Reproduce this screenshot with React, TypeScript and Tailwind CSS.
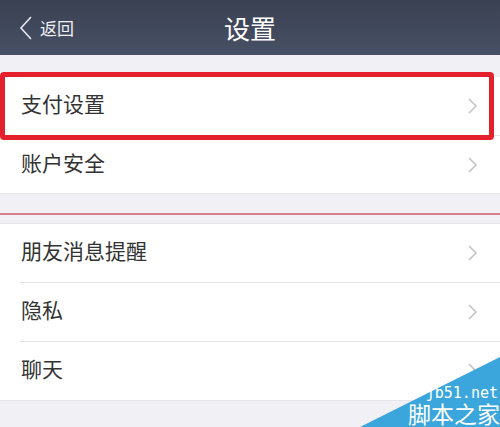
import React from "react";

const font = { fontFamily: '"Noto Sans CJK SC", "Noto Sans", sans-serif' };

const Chevron = () => (
  <svg width="11" height="18" viewBox="0 0 11 18" className="shrink-0">
    <path d="M2 2 L9 9 L2 16" fill="none" stroke="#c4c4c8" strokeWidth="1.6" />
  </svg>
);

const Row = ({ label, line, h }: { label: string; line?: boolean; h: string }) => (
  <div className={`flex flex-col bg-white ${h}`}>
    {line && <div className="ml-[20px] h-px bg-[#e4e4e8]" />}
    <div className="flex flex-1 items-center justify-between pl-[21px] pr-[22px]">
      <span className="mb-[5px] text-[21px] text-[#333] leading-none">{label}</span>
      <Chevron />
    </div>
  </div>
);

export default function App() {
  return (
    <div className="relative w-[500px] h-[427px] overflow-hidden bg-[#f1f1f5]" style={font}>
      <div className="relative h-[55px] flex items-center justify-center bg-gradient-to-b from-[#3a4152] to-[#485065]">
        <div className="absolute left-[19px] top-0 h-full flex items-center gap-[7px]">
          <svg width="14" height="26" viewBox="0 0 14 26">
            <path d="M12 2 L2 13 L12 24" fill="none" stroke="#e6e8ee" strokeWidth="1.6" />
          </svg>
          <span className="text-[17px] text-[#eef0f4]">返回</span>
        </div>
        <span className="text-[26px] text-white">设置</span>
      </div>

      <div className="mt-[22px] border-b border-[#e4e4e8]">
        <div className="relative z-10">
          <Row label="支付设置" h="h-[58px]" />
          <div className="absolute -top-[5px] -bottom-[5px] left-0 right-[6px] border-[5px] border-[#e3202b] rounded-[4px]" />
        </div>
        <Row label="账户安全" line h="h-[58px]" />
      </div>

      <div className="mt-[19px] h-[2px] bg-[#d8808e]" />

      <div className="mt-[8px] border-t border-b border-[#e6e6ea]">
        <Row label="朋友消息提醒" h="h-[58px]" />
        <Row label="隐私" line h="h-[59px]" />
        <Row label="聊天" line h="h-[59px]" />
      </div>

      <div className="absolute right-0 bottom-0 w-[140px] h-[70px]">
        <svg width="140" height="70" viewBox="0 0 140 70" className="absolute inset-0">
          <polygon points="0,70 140,0 140,70" fill="#3aa6dc" />
        </svg>
        <div className="absolute right-0 bottom-[2px] flex flex-col items-end">
          <span className="text-[15px] leading-[15px] text-white pr-[2px]" style={{ fontFamily: '"DejaVu Sans Mono", monospace' }}>
            jb51.net
          </span>
          <span className="text-[23px] leading-[24px] text-white">脚本之家</span>
        </div>
      </div>
    </div>
  );
}
